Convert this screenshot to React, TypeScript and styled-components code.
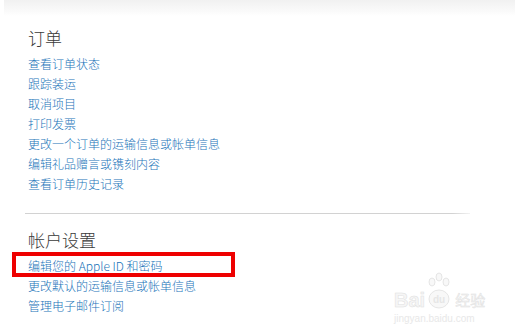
import React from "react";
import styled, { createGlobalStyle } from "styled-components";

const GlobalStyle = createGlobalStyle`
  html, body {
    margin: 0;
    padding: 0;
    background: #fff;
  }
  body {
    font-family: "Noto Sans CJK SC", "Liberation Sans", sans-serif;
  }
`;

const Page = styled.div`
  position: relative;
  width: 515px;
  height: 336px;
  overflow: hidden;
  background: #fff;
`;

const TopShade = styled.div`
  height: 16px;
  margin-left: 4px;
  background: linear-gradient(#f1f1f1, #fafafa 70%, #fff);
`;

const Content = styled.div`
  margin-left: 25px;
  width: 445px;
  padding-top: 10px;
`;

const Section = styled.section`
  padding-left: 3px;
`;

const Heading = styled.h2`
  margin: 0 0 4px;
  font-size: 17px;
  line-height: 24px;
  font-weight: 300;
  color: #3a3a3a;
`;

const LinkList = styled.ul`
  list-style: none;
  margin: 0;
  padding: 0;
`;

const LinkItem = styled.li`
  position: relative;
  font-size: 12px;
  line-height: 20px;
  font-weight: 300;
  color: #1a74b9;
`;

const Link = styled.a`
  color: inherit;
  text-decoration: none;
`;

const Divider = styled.hr`
  border: 0;
  height: 1px;
  margin: 19px 0 14px;
  background: linear-gradient(to right, #d2d2d2 96%, #f2f2f2);
`;

const Highlight = styled.span`
  position: absolute;
  left: -16px;
  top: -4px;
  width: 215px;
  height: 17px;
  border: 4px solid #ee0000;
  pointer-events: none;
`;

const Watermark = styled.div`
  position: absolute;
  left: 394px;
  top: 272px;
  width: 95px;
  font-family: "Liberation Sans", sans-serif;
  pointer-events: none;
`;

const MarkRow = styled.div`
  display: flex;
  align-items: flex-end;
  gap: 1px;
  height: 37px;
`;

const MarkBai = styled.span`
  font-size: 20px;
  font-weight: 700;
  line-height: 18px;
  -webkit-text-stroke: 0.5px #e0e0e0;
  color: #f6f6f6;
`;

const MarkCn = styled.span`
  font-family: "Noto Sans CJK SC", sans-serif;
  font-size: 15px;
  line-height: 18px;
  margin-left: 2px;
  color: #f6f6f6;
  -webkit-text-stroke: 0.5px #e2e2e2;
`;

const MarkUrl = styled.div`
  font-size: 10px;
  line-height: 12px;
  margin-top: 4px;
  color: #e8e8e8;
`;

const Paw = () => (
  <svg width="26" height="37" viewBox="0 0 26 37">
    <g fill="#f8f8f8" stroke="#e0e0e0" strokeWidth="0.8">
      <ellipse cx="6" cy="10" rx="3" ry="4" />
      <ellipse cx="13" cy="5" rx="3" ry="4" />
      <ellipse cx="20" cy="10" rx="3" ry="4" />
      <ellipse cx="13" cy="27" rx="10" ry="9" />
    </g>
    <text x="13" y="31" fontSize="10" textAnchor="middle" fill="#e6e6e6" fontFamily="Liberation Sans, sans-serif" fontWeight="700">
      du
    </text>
  </svg>
);

const orderLinks = [
  "查看订单状态",
  "跟踪装运",
  "取消项目",
  "打印发票",
  "更改一个订单的运输信息或帐单信息",
  "编辑礼品赠言或镌刻内容",
  "查看订单历史记录",
];

const accountLinks = [
  "编辑您的 Apple ID 和密码",
  "更改默认的运输信息或帐单信息",
  "管理电子邮件订阅",
];

export default function App() {
  return (
    <Page>
      <GlobalStyle />
      <TopShade />
      <Content>
        <Section>
          <Heading>订单</Heading>
          <LinkList>
            {orderLinks.map((t) => (
              <LinkItem key={t}>
                <Link href="#">{t}</Link>
              </LinkItem>
            ))}
          </LinkList>
        </Section>
        <Divider />
        <Section>
          <Heading>帐户设置</Heading>
          <LinkList>
            {accountLinks.map((t, i) => (
              <LinkItem key={t}>
                <Link href="#">{t}</Link>
                {i === 0 && <Highlight />}
              </LinkItem>
            ))}
          </LinkList>
        </Section>
      </Content>
      <Watermark>
        <MarkRow>
          <MarkBai>Bai</MarkBai>
          <Paw />
          <MarkCn>经验</MarkCn>
        </MarkRow>
        <MarkUrl>jingyan.baidu.com</MarkUrl>
      </Watermark>
    </Page>
  );
}
